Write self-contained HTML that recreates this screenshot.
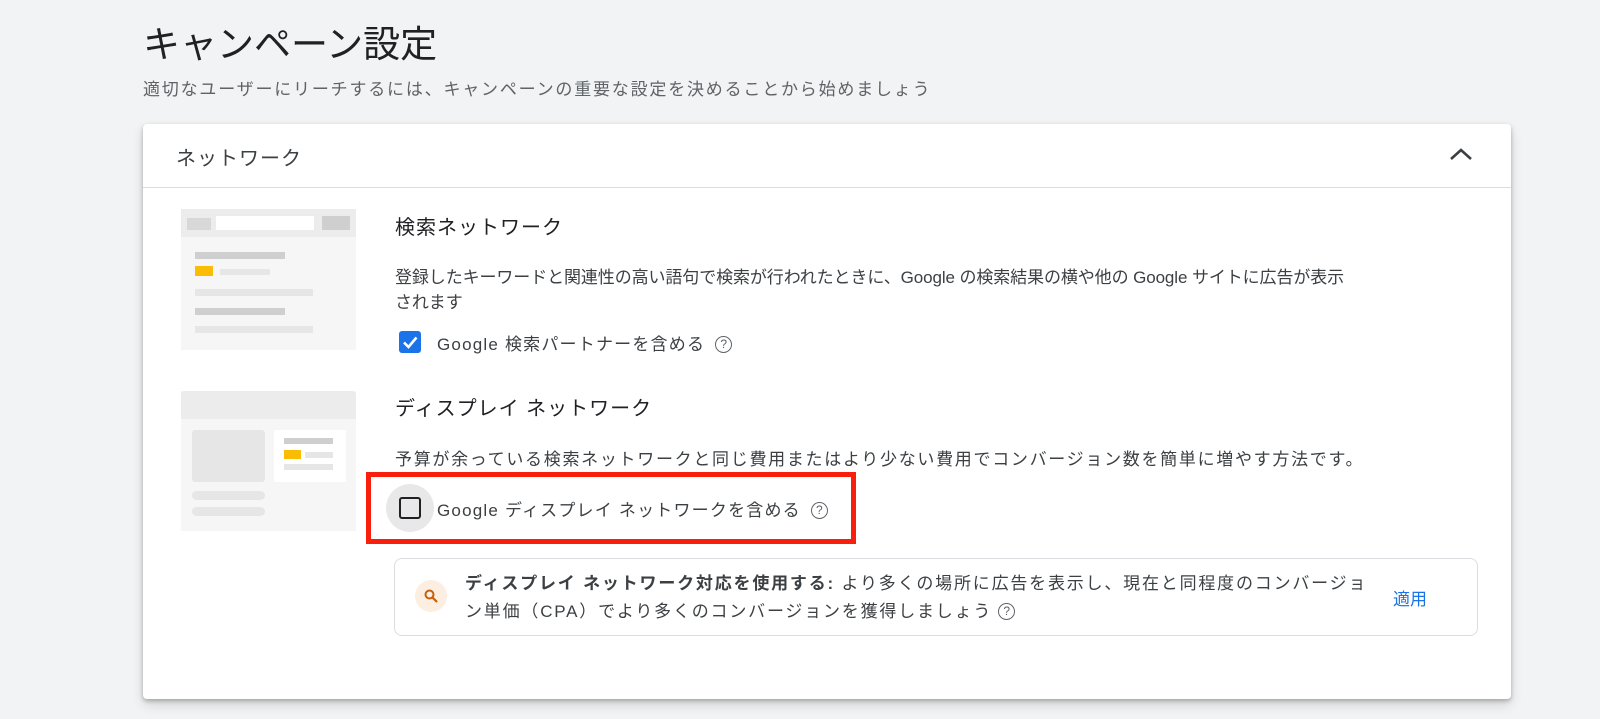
<!DOCTYPE html>
<html><head><meta charset="utf-8">
<style>
*{margin:0;padding:0;box-sizing:border-box}
body{width:1600px;height:719px;background:#f1f3f4;font-family:"Liberation Sans","Noto Sans CJK JP",sans-serif;color:#3c4043;position:relative;overflow:hidden}
.abs{position:absolute;white-space:nowrap}
h1{position:absolute;left:143px;top:14px;font-size:37px;font-weight:400;color:#202124}
.sub{left:143px;top:75px;font-size:17px;color:#5f6368;letter-spacing:1.8px}
.card{position:absolute;left:143px;top:124px;width:1368px;height:575px;background:#fff;border-radius:4px;box-shadow:0 2px 4px rgba(0,0,0,.25),0 6px 12px rgba(0,0,0,.12)}
.hdr{position:absolute;left:0;top:0;width:100%;height:64px;border-bottom:1px solid #dadce0}
.t{font-size:17px;color:#3c4043}
.h2{font-size:20px;color:#202124;letter-spacing:1px}
.cb{position:absolute;width:22px;height:22px;border-radius:3px}
.q{display:inline-block;width:17px;height:17px;border:1.5px solid #5f6368;border-radius:50%;font-size:12px;line-height:14px;text-align:center;color:#5f6368;vertical-align:2px;margin-left:10px;letter-spacing:0}
</style></head><body>
<h1>キャンペーン設定</h1>
<div class="abs sub">適切なユーザーにリーチするには、キャンペーンの重要な設定を決めることから始めましょう</div>
<div class="card">
 <div class="hdr">
  <div class="abs" style="left:33px;top:18px;font-size:20px;color:#3c4043;letter-spacing:1px">ネットワーク</div>
  <svg class="abs" style="left:1305px;top:21px" width="26" height="18" viewBox="0 0 26 18"><path d="M3 14 L13 5 L23 14" stroke="#3c4043" stroke-width="2.6" fill="none"/></svg>
 </div>
</div>
<div class="abs" style="left:181px;top:209px;width:175px;height:141px;background:#f6f6f6">
 <div class="abs" style="left:0;top:0;width:175px;height:28px;background:#ececec"></div>
 <div class="abs" style="left:6px;top:9px;width:24px;height:12px;background:#d8d8d8"></div>
 <div class="abs" style="left:35px;top:7px;width:98px;height:14px;background:#fff"></div>
 <div class="abs" style="left:141px;top:7px;width:28px;height:14px;background:#cfcfcf"></div>
 <div class="abs" style="left:14px;top:43px;width:90px;height:7px;background:#cfcfcf"></div>
 <div class="abs" style="left:14px;top:57px;width:18px;height:10px;background:#fbbc04"></div>
 <div class="abs" style="left:39px;top:60px;width:50px;height:6px;background:#e6e6e6"></div>
 <div class="abs" style="left:14px;top:80px;width:118px;height:7px;background:#e6e6e6"></div>
 <div class="abs" style="left:14px;top:99px;width:90px;height:7px;background:#cfcfcf"></div>
 <div class="abs" style="left:14px;top:117px;width:118px;height:7px;background:#e6e6e6"></div>
</div>
<div class="abs" style="left:181px;top:391px;width:175px;height:140px;background:#f6f6f6">
 <div class="abs" style="left:0;top:0;width:175px;height:28px;background:#ececec;border-radius:4px 4px 0 0"></div>
 <div class="abs" style="left:11px;top:39px;width:73px;height:52px;background:#e6e6e6;border-radius:3px"></div>
 <div class="abs" style="left:93px;top:39px;width:72px;height:52px;background:#fff"></div>
 <div class="abs" style="left:103px;top:47px;width:49px;height:6px;background:#cfcfcf"></div>
 <div class="abs" style="left:103px;top:59px;width:17px;height:9px;background:#fbbc04"></div>
 <div class="abs" style="left:124px;top:61px;width:28px;height:6px;background:#e6e6e6"></div>
 <div class="abs" style="left:103px;top:73px;width:49px;height:6px;background:#e6e6e6"></div>
 <div class="abs" style="left:11px;top:100px;width:73px;height:9px;background:#e6e6e6;border-radius:5px"></div>
 <div class="abs" style="left:11px;top:116px;width:73px;height:9px;background:#e6e6e6;border-radius:5px"></div>
</div>
<div class="abs h2" style="left:395px;top:211px">検索ネットワーク</div>
<div class="abs t" style="left:395px;top:263px;letter-spacing:-0.1px">登録したキーワードと関連性の高い語句で検索が行われたときに、Google の検索結果の横や他の Google サイトに広告が表示</div>
<div class="abs t" style="left:395px;top:288px;letter-spacing:-0.1px">されます</div>
<div class="cb" style="left:399px;top:331px;background:#1a73e8"><svg width="22" height="22" viewBox="0 0 22 22"><path d="M5 11.5 L9.5 16 L17.5 6.5" stroke="#fff" stroke-width="2.6" fill="none"/></svg></div>
<div class="abs t" style="left:437px;top:330px;letter-spacing:1.2px">Google 検索パートナーを含める<span class="q">?</span></div>
<div class="abs h2" style="left:395px;top:392px">ディスプレイ ネットワーク</div>
<div class="abs t" style="left:395px;top:445px;letter-spacing:1.7px">予算が余っている検索ネットワークと同じ費用またはより少ない費用でコンバージョン数を簡単に増やす方法です。</div>
<div class="abs" style="left:366px;top:472px;width:490px;height:72px;border:5px solid #f8200c"></div>
<div class="abs" style="left:386px;top:484px;width:48px;height:48px;border-radius:50%;background:#e8e8e8"></div>
<div class="cb" style="left:399px;top:497px;border:2.5px solid #202124"></div>
<div class="abs t" style="left:437px;top:496px;letter-spacing:1.2px">Google ディスプレイ ネットワークを含める<span class="q">?</span></div>
<div class="abs" style="left:394px;top:558px;width:1084px;height:78px;border:1px solid #dadce0;border-radius:8px;background:#fff"></div>
<div class="abs" style="left:415px;top:580px;width:32px;height:32px;border-radius:50%;background:#fdeee2"></div>
<svg class="abs" style="left:423px;top:588px" width="16" height="16" viewBox="0 0 16 16"><circle cx="6.5" cy="6.5" r="4" stroke="#c5600c" stroke-width="2" fill="none"/><path d="M9.5 9.5 L14 14" stroke="#c5600c" stroke-width="2.2"/></svg>
<div class="abs t" style="left:465px;top:569px;letter-spacing:1.8px"><b style="color:#3c4043">ディスプレイ ネットワーク対応を使用する:</b> より多くの場所に広告を表示し、現在と同程度のコンバージョ</div>
<div class="abs t" style="left:465px;top:597px;letter-spacing:1.8px">ン単価（CPA）でより多くのコンバージョンを獲得しましょう<span class="q" style="margin-left:6px">?</span></div>
<div class="abs" style="left:1393px;top:585px;font-size:17px;color:#1a73e8">適用</div>
</body></html>
